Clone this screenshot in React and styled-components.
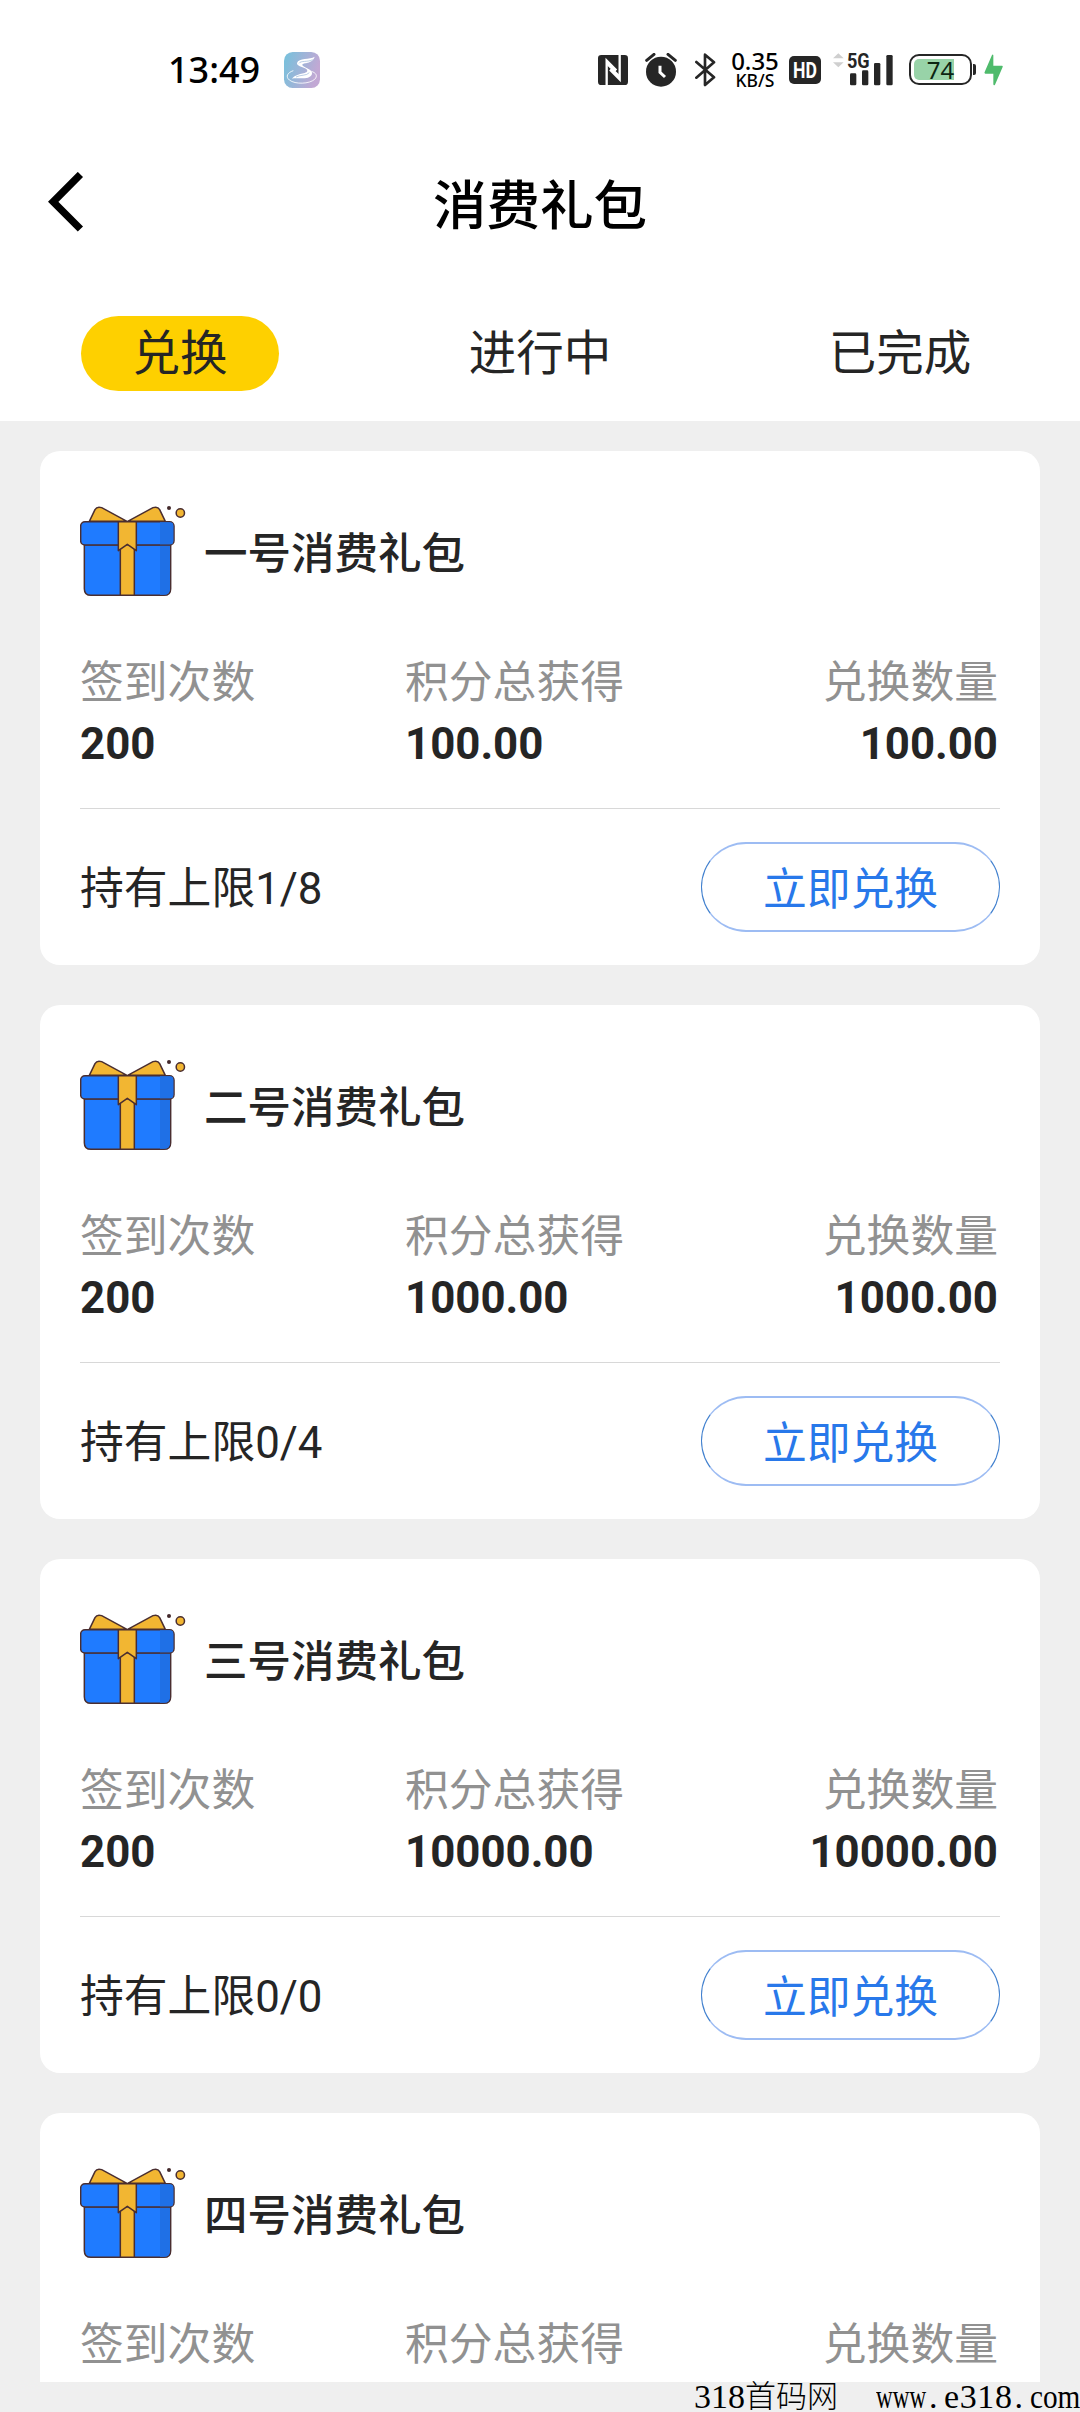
import styled, { createGlobalStyle } from 'styled-components';

const packs = [
  { id: 1, name: '一号消费礼包', days: '200', points: '100.00', cost: '100.00', limit: '1/8' },
  { id: 2, name: '二号消费礼包', days: '200', points: '1000.00', cost: '1000.00', limit: '0/4' },
  { id: 3, name: '三号消费礼包', days: '200', points: '10000.00', cost: '10000.00', limit: '0/0' },
  { id: 4, name: '四号消费礼包' },
];

const tabs = ['兑换', '进行中', '已完成'];

export default function App() {
  return (
    <>
      <GlobalStyle/>
      <Page>
        <Top>
          <StatusBar/>
          <Header>
            <BackIcon viewBox="0 0 36 60">
              <path d="M32.4 2.5L5.2 29.8L32.4 57" fill="none" stroke="#000" strokeWidth="7.4"/>
            </BackIcon>
            <Title>消费礼包</Title>
          </Header>
          <Tabs>
            {tabs.map((tab, i) => <Tab key={tab} $active={i === 0}>{tab}</Tab>)}
          </Tabs>
        </Top>
        <List>
          {packs.map((pack) => <PackCard key={pack.id} pack={pack}/>)}
        </List>
        <Footer>
          <span>318</span>
          <Site>首码网</Site>
          <Squeezed $width={51} $scale={0.68}>www</Squeezed>
          <Dot>.</Dot>
          <Domain>e318</Domain>
          <Dot>.</Dot>
          <Squeezed $width={50} $scale={0.86}>com</Squeezed>
        </Footer>
      </Page>
    </>
  );
}

function PackCard({ pack }) {
  return (
    <Card>
      <CardTitle>
        <GiftIcon/>
        <span>{pack.name}</span>
      </CardTitle>
      <Stats>
        <Stat>
          <Label>签到次数</Label>
          {pack.days && <Value>{pack.days}</Value>}
        </Stat>
        <Stat>
          <Label>积分总获得</Label>
          {pack.points && <Value>{pack.points}</Value>}
        </Stat>
        <Stat $right>
          <Label>兑换数量</Label>
          {pack.cost && <Value>{pack.cost}</Value>}
        </Stat>
      </Stats>
      {pack.limit && (
        <CardFooter>
          <Limit>持有上限{pack.limit}</Limit>
          <Exchange>立即兑换</Exchange>
        </CardFooter>
      )}
    </Card>
  );
}

function GiftIcon() {
  return (
    <Gift viewBox="60 75 318 276" stroke="#4a2e30" strokeWidth="4.5" strokeLinejoin="round">
      <path d="M88 124L105 89Q111 78 125 83L201 124Z" fill="#f2b632"/>
      <path d="M316 124L299 89Q293 78 279 83L203 124Z" fill="#f2b632"/>
      <path d="M73 194H332V326Q332 346 312 346H93Q73 346 73 326Z" fill="#1f7bff"/>
      <path d="M300 196H330V326Q330 344 312 344H300Z" fill="#1f70e6" stroke="none"/>
      <rect x="62" y="125" width="280" height="70" rx="13" fill="#1f7bff"/>
      <path d="M300 127H330Q340 127 340 137V182Q340 193 330 193H300Z" fill="#1f70e6" stroke="none"/>
      <path d="M181 194H223V346H181Z" fill="#f2b632"/>
      <path d="M175 125H229V212L202 193L175 212Z" fill="#f2b632"/>
      <circle cx="327" cy="84" r="6" fill="#43292b" stroke="none"/>
      <circle cx="361" cy="99" r="12.5" fill="#f2b632"/>
    </Gift>
  );
}

function StatusBar() {
  return (
    <Status>
      <Clock>13:49</Clock>
      <Glyph $w={36} $h={36} $left={23} viewBox="0 0 108 108">
        <defs>
          <linearGradient id="appIcon" x1="0" y1="0" x2="1" y2="0.3">
            <stop offset="0" stopColor="#74c2dc"/>
            <stop offset="1" stopColor="#c2a8d4"/>
          </linearGradient>
        </defs>
        <rect width="108" height="108" rx="26" fill="url(#appIcon)"/>
        <path d="M28 56C10 62 4 74 16 84C34 98 76 96 92 82C102 72 96 62 82 58" fill="none" stroke="#fff" strokeWidth="2.5"/>
        <path d="M92 14C78 24 44 16 39 33C36 44 70 46 70 56C70 66 38 62 24 80C40 76 78 86 84 66C88 50 54 46 55 38C58 30 84 38 92 14Z" fill="#fff"/>
        <path d="M86 23C72 31 50 25 45 34M76 62C68 72 48 68 36 75" fill="none" stroke="#99b5d8" strokeWidth="2"/>
      </Glyph>
      <Icons>
        <Glyph $w={30} $h={30} viewBox="0 0 90 90">
          <rect width="90" height="90" rx="10" fill="#262626"/>
          <path d="M26 90V17L55 46M65 0V73L36 44" fill="none" stroke="#fff" strokeWidth="7"/>
          <path d="M26 18L53 44V56L26 30ZM65 72L38 46V34L65 60Z" fill="#fff"/>
        </Glyph>
        <Glyph $w={32} $h={34} $left={17} viewBox="0 0 96 102">
          <circle cx="48" cy="56" r="45" fill="#262626"/>
          <path d="M5 22L27 4M91 22L69 4" stroke="#262626" strokeWidth="9" strokeLinecap="round"/>
          <path d="M45 38V58L60 72" fill="none" stroke="#fff" strokeWidth="9"/>
        </Glyph>
        <Glyph $w={21} $h={34} $left={18} viewBox="0 0 63 102">
          <path d="M4 27L57 73L30 96V5L57 28L4 74" fill="none" stroke="#262626" strokeWidth="8" strokeLinejoin="round" strokeLinecap="round"/>
        </Glyph>
        <Speed>
          <b>0.35</b>
          <small>KB/S</small>
        </Speed>
        <Hd><span>HD</span></Hd>
        <Signal>
          <svg width="62" height="34" viewBox="0 0 186 102">
            <path d="M0 16L16 1L32 16ZM0 28H32L16 43Z" fill="#cfcfcf"/>
            <rect x="51" y="61" width="19" height="36" rx="4" fill="#262626"/>
            <rect x="87" y="52" width="19" height="45" rx="4" fill="#262626"/>
            <rect x="123" y="30" width="19" height="67" rx="4" fill="#262626"/>
            <rect x="160" y="6" width="19" height="91" rx="4" fill="#262626"/>
          </svg>
          <Network>5G</Network>
        </Signal>
        <Battery>
          <Level style={{ width: '40px' }}/>
          <span>74</span>
        </Battery>
        <Cap/>
        <Glyph $w={19} $h={32} $left={8} viewBox="0 0 57 96">
          <path d="M24 3Q27 0 28 4V35H54Q58 36 55 41L33 92Q29 96 28 91V59H4Q0 58 2 54Z" fill="#4fbb6c"/>
        </Glyph>
      </Icons>
    </Status>
  );
}

const GlobalStyle = createGlobalStyle`
  *{
    box-sizing: border-box;
  }
  body{
    margin: 0;
    background: #efefef;
    color: #252525;
    font-family: Roboto, 'Noto Sans CJK SC', sans-serif;
  }
`;

const Page = styled.div`
  width: 1080px;
  height: 2412px;
  display: flex;
  flex-direction: column;
  overflow: hidden;
  background: #efefef;
`;

const Top = styled.div`
  flex: none;
  height: 421px;
  background: #fff;
`;

const Status = styled.div`
  height: 140px;
  padding: 0 0 1px 168px;
  display: flex;
  align-items: center;
`;

const Clock = styled.div`
  width: 93px;
  font-family: 'Noto Sans', sans-serif;
  font-size: 36px;
  font-weight: 500;
  line-height: 40px;
  color: #000;
`;

const Glyph = styled.svg`
  flex: none;
  width: ${({ $w }) => $w}px;
  height: ${({ $h }) => $h}px;
  margin-left: ${({ $left = 0 }) => $left}px;
`;

const Icons = styled.div`
  margin-left: 278px;
  display: flex;
  align-items: center;
`;

const Speed = styled.div`
  width: 54px;
  margin-left: 12px;
  display: flex;
  flex-direction: column;
  align-items: center;
  font-family: 'Noto Sans', sans-serif;
  color: #000;
  b{
    font-size: 24px;
    font-weight: 500;
    line-height: 20px;
  }
  small{
    font-size: 17.5px;
    font-weight: 500;
    line-height: 18px;
  }
`;

const Hd = styled.div`
  width: 32px;
  height: 28px;
  margin-left: 7px;
  border-radius: 5px;
  display: flex;
  justify-content: center;
  background: #262626;
  color: #fff;
  font-size: 22px;
  font-weight: 700;
  line-height: 29px;
  span{
    transform: scaleX(0.8);
  }
`;

const Signal = styled.div`
  position: relative;
  height: 34px;
  margin-left: 12px;
`;

const Network = styled.span`
  position: absolute;
  top: -1px;
  left: 14px;
  font-size: 21px;
  font-weight: 700;
  line-height: 19px;
  transform: scaleX(0.86);
  transform-origin: left;
`;

const Battery = styled.div`
  position: relative;
  width: 63px;
  height: 31px;
  margin-left: 14px;
  border: 2px solid #262626;
  border-radius: 10px;
  font-family: 'Noto Sans', sans-serif;
  font-size: 24px;
  line-height: 27px;
  text-align: center;
  color: #0c2513;
  span{
    position: relative;
  }
`;

const Level = styled.div`
  position: absolute;
  top: 3px;
  left: 3px;
  height: 21px;
  border-radius: 5px 0 0 5px;
  background: #98d3a8;
`;

const Cap = styled.div`
  width: 3px;
  height: 11px;
  margin-left: 1px;
  border-radius: 0 2px 2px 0;
  background: #262626;
`;

const Header = styled.div`
  height: 124px;
  padding: 0 48px;
  display: flex;
  align-items: center;
`;

const BackIcon = styled.svg`
  width: 36px;
  height: 60px;
`;

const Title = styled.div`
  flex: 1;
  margin-right: 36px;
  padding-bottom: 2px;
  font-size: 53.5px;
  font-weight: 500;
  text-align: center;
  color: #000;
`;

const Tabs = styled.div`
  height: 179px;
  display: grid;
  grid-template-columns: repeat(3, 1fr);
  justify-items: center;
  align-items: center;
`;

const Tab = styled.div`
  width: 198px;
  height: 75px;
  border-radius: 38px;
  background: ${({ $active }) => ($active ? '#fed000' : 'transparent')};
  font-size: 47.5px;
  line-height: 77px;
  text-align: center;
`;

const List = styled.div`
  flex: none;
  height: 1961px;
  padding: 30px 40px 0;
  display: flex;
  flex-direction: column;
  gap: 40px;
  overflow: hidden;
`;

const Card = styled.div`
  flex: none;
  height: 514px;
  padding: 54px 40px 0;
  border-radius: 20px;
  background: #fff;
  font-size: 43.8px;
`;

const CardTitle = styled.div`
  height: 92px;
  display: flex;
  align-items: center;
  font-size: 43.5px;
  font-weight: 500;
  span{
    padding-bottom: 2px;
  }
`;

const Gift = styled.svg`
  width: 106px;
  height: 92px;
  margin-right: 18px;
`;

const Stats = styled.div`
  height: 212px;
  padding: 55px 2px 0 0;
  display: grid;
  grid-template-columns: 325px 1fr auto;
  border-bottom: 1px solid #d8d8d8;
`;

const Stat = styled.div`
  text-align: ${({ $right }) => ($right ? 'right' : 'left')};
`;

const Label = styled.div`
  line-height: 62px;
  color: #919191;
`;

const Value = styled.div`
  font-weight: 700;
  line-height: 60px;
`;

const CardFooter = styled.div`
  height: 156px;
  display: flex;
  justify-content: space-between;
  align-items: center;
`;

const Limit = styled.span`
  padding-bottom: 4px;
`;

const Exchange = styled.button`
  width: 299px;
  height: 90px;
  padding: 0 0 3px;
  border: solid;
  border-width: 2px 1px;
  border-color: #9dbcf3 #3f7fce;
  border-radius: 45px;
  background: #fff;
  color: #2878ea;
  font: inherit;
`;

const Footer = styled.div`
  height: 30px;
  padding-left: 694px;
  display: flex;
  align-items: center;
  font-family: 'Liberation Serif', 'Noto Sans CJK SC', serif;
  font-size: 34px;
  line-height: 30px;
  white-space: nowrap;
  color: #000;
`;

const Site = styled.span`
  width: 131px;
  font-size: 31px;
  font-weight: 300;
`;

const Squeezed = styled.span`
  width: ${({ $width }) => $width}px;
  transform: scaleX(${({ $scale }) => $scale});
  transform-origin: left;
`;

const Dot = styled.span`
  width: 17px;
  padding-left: 2px;
`;

const Domain = styled.span`
  letter-spacing: 0.6px;
`;
